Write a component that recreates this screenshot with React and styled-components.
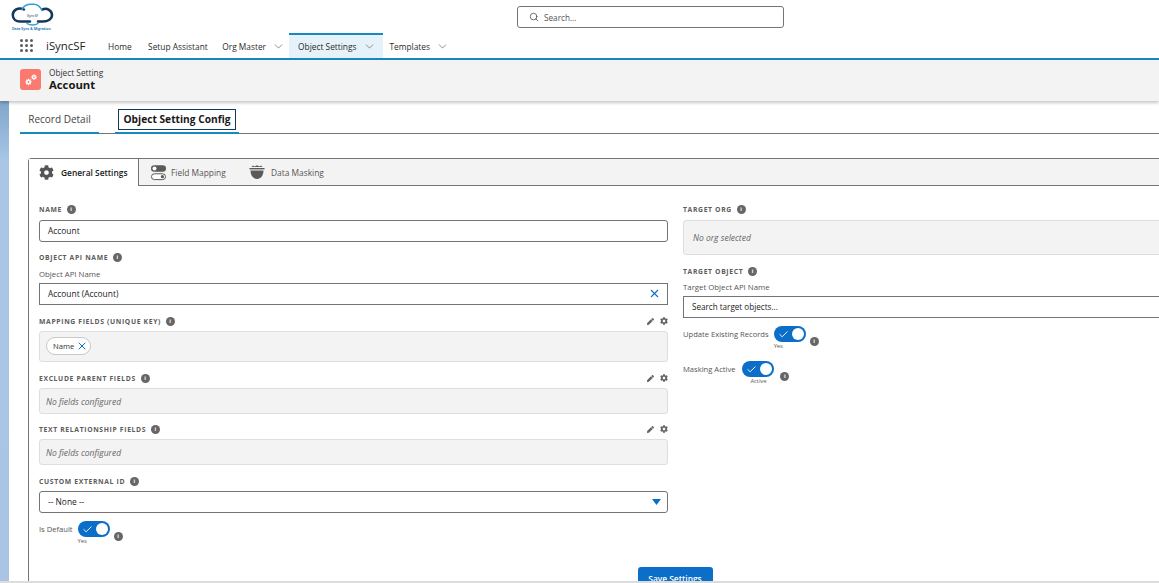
import React from "react";
import styled, { createGlobalStyle } from "styled-components";
import { FaCog, FaPen } from "react-icons/fa";
import { ChevronDown, Search, X, Check } from "lucide-react";

const Global = createGlobalStyle`
  html, body { margin: 0; padding: 0; background: #fff; }
  body { font-family: "Open Sans", "Noto Sans", "Liberation Sans", sans-serif; color: #181818; }
  * { box-sizing: border-box; }
`;

const Page = styled.div`
  width: 1159px; height: 583px; overflow: hidden; background: #fff;
  display: flex; flex-direction: column;
`;
const Header = styled.header`
  height: 60px; flex: none; border-bottom: 2px solid #1589c0; background: #fff;
  display: flex; flex-direction: column;
`;
const TopRow = styled.div`
  height: 33px; flex: none; display: grid; grid-template-columns: 517px 267px; padding-top: 3px; align-items: start;
`;
const LogoWrap = styled.div`
  padding-left: 11px; height: 30px;
`;
const SearchBox = styled.div`
  margin-top: 3px; height: 22px; border: 1px solid #747474; border-radius: 3px; display: flex; align-items: center;
  padding-left: 11px; gap: 5px; font-size: 8.2px; color: #555; background: #fff;
`;
const NavRow = styled.nav`
  flex: 1; display: flex; align-items: stretch; padding-left: 20px;
`;
const Waffle = styled.div`
  width: 13px; height: 13px; margin-top: 6px; flex: none; display: grid; grid-template-columns: repeat(3, 3px); gap: 2px;
  span { width: 3px; height: 3px; border-radius: 50%; background: #5c5c5c; }
`;
const AppName = styled.div`
  font-size: 11.4px; margin-left: 13px; width: 54px; line-height: 25px; color: #222; flex: none;
`;
const NavItem = styled.div`
  display: flex; align-items: center; gap: 6px; font-size: 8.35px; color: #2b2b2b; padding: ${p => p.$pad || "0 8px 1px"};
  height: 25px; flex: none;
  background: ${p => p.$active ? "#e6f2f9" : "transparent"};
  border-top: 2px solid ${p => p.$active ? "#1589c0" : "transparent"};
  svg { color: #777; }
`;
const PageHead = styled.div`
  height: 41px; flex: none; background: #f3f3f3; box-shadow: 0 2px 3px rgba(0,0,0,.22); position: relative; z-index: 2;
  padding: 7px 0 0 20px; display: flex; gap: 8px; align-items: flex-start;
`;
const HeadIcon = styled.div`
  width: 21px; height: 21px; margin-top: 2px; background: #fb7a70; border-radius: 3px; flex: none;
  display: flex; align-items: center; justify-content: center; color: #fff;
`;
const HeadText = styled.div`
  display: flex; flex-direction: column;
  small { font-size: 8.3px; line-height: 11px; color: #333; }
  strong { font-size: 11.3px; line-height: 14px; font-weight: 700; color: #181818; }
`;
const Body = styled.div`
  flex: 1; display: flex; min-height: 0; overflow: hidden; border-bottom: 2px solid #dcdcdc;
`;
const Strip = styled.div`
  width: 9px; flex: none; background: linear-gradient(#7fa6cb 0, #a9c6e6 60px, #a9c5e3 100%);
`;
const Content = styled.main`
  flex: 1; min-width: 0; background: #fff; overflow: hidden;
`;
const TabsBar = styled.div`
  margin: 0 0 0 11px; height: 33px; display: flex; border-bottom: 1px solid #747474; align-items: flex-end;
`;
const PageTab = styled.div`
  height: 31px; margin-bottom: -1px; flex: none; width: ${p => p.$w}px; margin-right: ${p => p.$mr || 0}px;
  display: flex; align-items: center; justify-content: center; font-size: 10px; color: #444;
  padding-top: 3px;
  border-bottom: 2px solid #1589c0;
`;
const FocusTab = styled.span`
  display: flex; align-items: center; justify-content: center; width: 118px; height: 21px;
  border: 1px solid #0d3c5c; font-weight: 700; color: #181818; font-size: 10.2px;
`;
const Card = styled.section`
  margin: 24px 0 0 19px; width: 1294px; border: 1px solid #747474; border-radius: 3px 0 0 0; min-height: 440px;
`;
const CardTabs = styled.div`
  height: 27px; display: flex; background: #f3f3f3; border-bottom: 1px solid #747474;
`;
const CardTab = styled.div`
  height: ${p => p.$active ? 27 : 26}px; width: ${p => p.$w}px; flex: none; display: flex; align-items: center; gap: ${p => p.$gap || 6}px;
  padding-left: ${p => p.$pl || 10}px; font-size: 8.4px;
  color: ${p => p.$active ? "#181818" : "#555"}; font-weight: ${p => p.$active ? 600 : 400};
  background: ${p => p.$active ? "#fff" : "transparent"};
  border-right: ${p => p.$active ? "1px solid #747474" : "none"};
  svg { flex: none; color: #555; }
`;
const Columns = styled.div`
  display: grid; grid-template-columns: 629px 1fr; column-gap: 15px; padding: 18px 0 0 10px;
`;
const Col = styled.div`
  display: flex; flex-direction: column;
`;
const Label = styled.div`
  display: flex; align-items: center; height: 11px; gap: 5px; margin-top: ${p => p.$mt || 0}px; position: relative;
  font-size: 6.8px; font-weight: 700; letter-spacing: .65px; color: #5c5c5c; white-space: nowrap;
`;
const Info = styled.i`
  width: 9px; height: 9px; border-radius: 50%; background: #666; flex: none; color: #fff; display: inline-flex; align-items: center; justify-content: center;
  font: normal 700 6px/9px "Liberation Sans", sans-serif;
  &::before { content: "i"; }
`;
const SubLabel = styled.div`
  font-size: 7.8px; line-height: 11px; color: #555; margin-top: ${p => p.$mt || 6}px;
`;
const Input = styled.div`
  height: 22px; border: 1px solid #747474; border-radius: ${p => p.$square ? 0 : 3}px; background: #fff; margin-top: ${p => p.$mt || 5}px;
  display: flex; align-items: center; justify-content: space-between; padding: 0 6px 1px ${p => p.$pl || 8}px; font-size: ${p => p.$fs || 8.4}px; color: #222;
  svg { flex: none; }
`;
const ReadOnly = styled.div`
  height: ${p => p.$h}px; background: #f3f3f3; border: 1px solid #dedede; border-radius: 3px; margin-top: ${p => p.$mt || 5}px;
  display: flex; align-items: center; padding: 0 ${p => p.$pl || 6}px; font-size: 8.5px; font-style: italic; color: #666;
`;
const Pill = styled.span`
  height: 18px; margin-top: -2px; border: 1px solid #c9c9c9; border-radius: 9px; background: #fff; display: inline-flex; align-items: center; gap: 2px;
  padding: 0 2px 0 6px; font-size: 7.6px; font-style: normal; color: #333;
`;
const ClearIcon = styled(X)`
  color: #0b6fc9; stroke: #0b6fc9;
`;
const RowTools = styled.span`
  position: absolute; right: 0; top: 1px; display: flex; gap: 6px; align-items: center; color: #666;
`;
const ToggleRow = styled.div`
  display: flex; align-items: flex-start; margin-top: ${p => p.$mt}px; font-size: 7.6px; color: #555; gap: ${p => p.$gap}px;
  & > span:first-child { line-height: 16px; }
`;
const ToggleBox = styled.div`
  display: flex; flex-direction: column; align-items: center; width: 32px;
  small { font-size: 5.8px; line-height: 8px; color: #555; align-self: ${p => p.$left ? "flex-start" : "center"}; }
`;
const Track = styled.div`
  width: 32px; height: 16px; border-radius: 8px; background: #0b6fc9; position: relative; display: flex; align-items: center; padding-left: 4px; color: #fff;
  &::after { content: ""; position: absolute; right: 2px; top: 2px; width: 12px; height: 12px; border-radius: 50%; background: #fff; }
`;
const InfoSlot = styled.span`
  margin: 11px 0 0 -1px; display: flex;
`;
const SaveBar = styled.div`
  display: flex; justify-content: center; margin-top: 22px;
`;
const SaveButton = styled.button`
  width: 75px; height: 22px; border: 0; border-radius: 3px 3px 0 0; background: #0b6fc9; color: #fff; font: 600 8.4px "Open Sans", sans-serif; padding: 0;
`;

const Logo = () => (
  <svg width="46" height="30" viewBox="0 0 46 30" role="img" aria-label="iSyncSF logo">
    <path d="M13 6.5 C7 3.5 1.8 7.5 1.8 12 C1.8 16 5 18.5 9 18.5 H19" fill="none" stroke="#15375d" strokeWidth="2.5" strokeLinecap="round" />
    <path d="M27 18.5 H32 C37 18.5 41 16 41 12 C41 7.5 36 4.5 31.5 6.5" fill="none" stroke="#15375d" strokeWidth="2.5" strokeLinecap="round" />
    <path d="M11 6.5 C13 1.8 18 .9 22 1.3 C26 1 29 3 31 7.5" fill="none" stroke="#2f9ed1" strokeWidth="1.6" strokeLinecap="round" />
    <path d="M16 20.5 C19 22.5 24 22.5 27 20.5" fill="none" stroke="#2f9ed1" strokeWidth="1.4" strokeLinecap="round" />
    <text x="21.5" y="13.5" fontSize="3.4" textAnchor="middle" fill="#15375d" fontFamily="Open Sans, sans-serif">iSyncSF</text>
    <text x="1" y="26.5" fontSize="3.5" fontWeight="700" fill="#2a7db5" fontFamily="Open Sans, sans-serif">Data Sync &amp; Migration</text>
  </svg>
);

const Gears = () => (
  <svg width="14" height="14" viewBox="0 0 14 14" aria-hidden="true">
    <g transform="translate(4.5 9)" fill="#fff"><circle r="2.4" /><g stroke="#fff" strokeWidth="1.1"><path d="M0-3.3V3.3M-3.3 0H3.3M-2.3-2.3 2.3 2.3M-2.3 2.3 2.3-2.3" /></g><circle r=".9" fill="#fb7a70" /></g>
    <g transform="translate(10 4.2)" fill="#fff"><circle r="2" /><g stroke="#fff" strokeWidth="1"><path d="M0-2.9V2.9M-2.9 0H2.9M-2-2 2 2M-2 2 2-2" /></g><circle r=".8" fill="#fb7a70" /></g>
  </svg>
);

const Toggles = () => (
  <svg width="17" height="17" viewBox="0 0 17 17" aria-hidden="true">
    <rect x="1" y="1.2" width="15" height="6.6" rx="3.3" fill="#5a5a5a" />
    <circle cx="4.5" cy="4.5" r="2" fill="#fff" />
    <rect x="1.5" y="9.8" width="14" height="5.8" rx="2.9" fill="#fff" stroke="#5a5a5a" />
    <circle cx="12.4" cy="12.7" r="1.6" fill="#5a5a5a" />
  </svg>
);

const Mask = () => (
  <svg width="16" height="16" viewBox="0 0 16 16" aria-hidden="true">
    <path d="M2.5 3 L4 1.6 L5.5 2.4 L8 1.2 L10.5 2.4 L12 1.6 L13.5 3 Z" fill="#5a5a5a" />
    <rect x="0.5" y="4" width="15" height="1.4" fill="#5a5a5a" />
    <path d="M1.5 6.4 H14.5 C14.5 11 12 14.6 8 15 C4 14.6 1.5 11 1.5 6.4 Z" fill="#5a5a5a" />
  </svg>
);

const Tools = () => (
  <RowTools>
    <FaPen size={7} />
    <FaCog size={8} />
  </RowTools>
);

const Toggle = ({ label, value, gap, mt, left }) => (
  <ToggleRow $mt={mt} $gap={gap}>
    <span>{label}</span>
    <ToggleBox $left={left}>
      <Track><Check size={11} strokeWidth={2} /></Track>
      <small>{value}</small>
    </ToggleBox>
    <InfoSlot><Info /></InfoSlot>
  </ToggleRow>
);

export default function App() {
  return (
    <Page>
      <Global />
      <Header>
        <TopRow>
          <LogoWrap><Logo /></LogoWrap>
          <SearchBox><Search size={10} color="#555" />Search...</SearchBox>
        </TopRow>
        <NavRow>
          <Waffle>{Array.from({ length: 9 }, (_, i) => <span key={i} />)}</Waffle>
          <AppName>iSyncSF</AppName>
          <NavItem>Home</NavItem>
          <NavItem $pad="0 7px 1px 8.5px">Setup Assistant</NavItem>
          <NavItem $pad="0 4px 1px 7.5px">Org Master<ChevronDown size={13} strokeWidth={1.5} /></NavItem>
          <NavItem $active $pad="0 7px 1px 9px">Object Settings<ChevronDown size={13} strokeWidth={1.5} /></NavItem>
          <NavItem $pad="0 6px 1px 7px">Templates<ChevronDown size={13} strokeWidth={1.5} /></NavItem>
        </NavRow>
      </Header>
      <PageHead>
        <HeadIcon><Gears /></HeadIcon>
        <HeadText><small>Object Setting</small><strong>Account</strong></HeadText>
      </PageHead>
      <Body>
        <Strip />
        <Content>
          <TabsBar>
            <PageTab $w={79} $mr={16}>Record Detail</PageTab>
            <PageTab $w={124}><FocusTab>Object Setting Config</FocusTab></PageTab>
          </TabsBar>
          <Card>
            <CardTabs>
              <CardTab $active $w={110} $gap={7}><FaCog size={15} />General Settings</CardTab>
              <CardTab $w={99} $gap={4} $pl={11}><Toggles />Field Mapping</CardTab>
              <CardTab $w={90} $gap={6} $pl={11}><Mask />Data Masking</CardTab>
            </CardTabs>
            <Columns>
              <Col>
                <Label>NAME<Info /></Label>
                <Input $mt={5}>Account</Input>
                <Label $mt={10}>OBJECT API NAME<Info /></Label>
                <SubLabel $mt={6}>Object API Name</SubLabel>
                <Input $square $mt={3}>Account (Account)<ClearIcon size={13} strokeWidth={2} /></Input>
                <Label $mt={11}>MAPPING FIELDS (UNIQUE KEY)<Info /><Tools /></Label>
                <ReadOnly $h={31} $mt={4}><Pill>Name<ClearIcon size={12} strokeWidth={2} /></Pill></ReadOnly>
                <Label $mt={11}>EXCLUDE PARENT FIELDS<Info /><Tools /></Label>
                <ReadOnly $h={26} $mt={4}>No fields configured</ReadOnly>
                <Label $mt={10}>TEXT RELATIONSHIP FIELDS<Info /><Tools /></Label>
                <ReadOnly $h={26} $mt={4}>No fields configured</ReadOnly>
                <Label $mt={11}>CUSTOM EXTERNAL ID<Info /></Label>
                <Input $mt={4}>-- None --
                  <svg width="9" height="6" viewBox="0 0 9 6" aria-hidden="true"><path d="M0 0H9L4.5 6Z" fill="#0b6fc9" /></svg>
                </Input>
                <Toggle label="Is Default" value="Yes" gap={5} mt={8} left />
              </Col>
              <Col>
                <Label>TARGET ORG<Info /></Label>
                <ReadOnly $h={35} $mt={5} $pl={9}>No org selected</ReadOnly>
                <Label $mt={11}>TARGET OBJECT<Info /></Label>
                <SubLabel $mt={5}>Target Object API Name</SubLabel>
                <Input $square $mt={3} $pl={8} $fs={8.1}>Search target objects...</Input>
                <Toggle label="Update Existing Records" value="Yes" gap={5} mt={8} left />
                <Toggle label="Masking Active" value="Active" gap={7} mt={11} />
              </Col>
            </Columns>
            <SaveBar><SaveButton>Save Settings</SaveButton></SaveBar>
          </Card>
        </Content>
      </Body>
    </Page>
  );
}
